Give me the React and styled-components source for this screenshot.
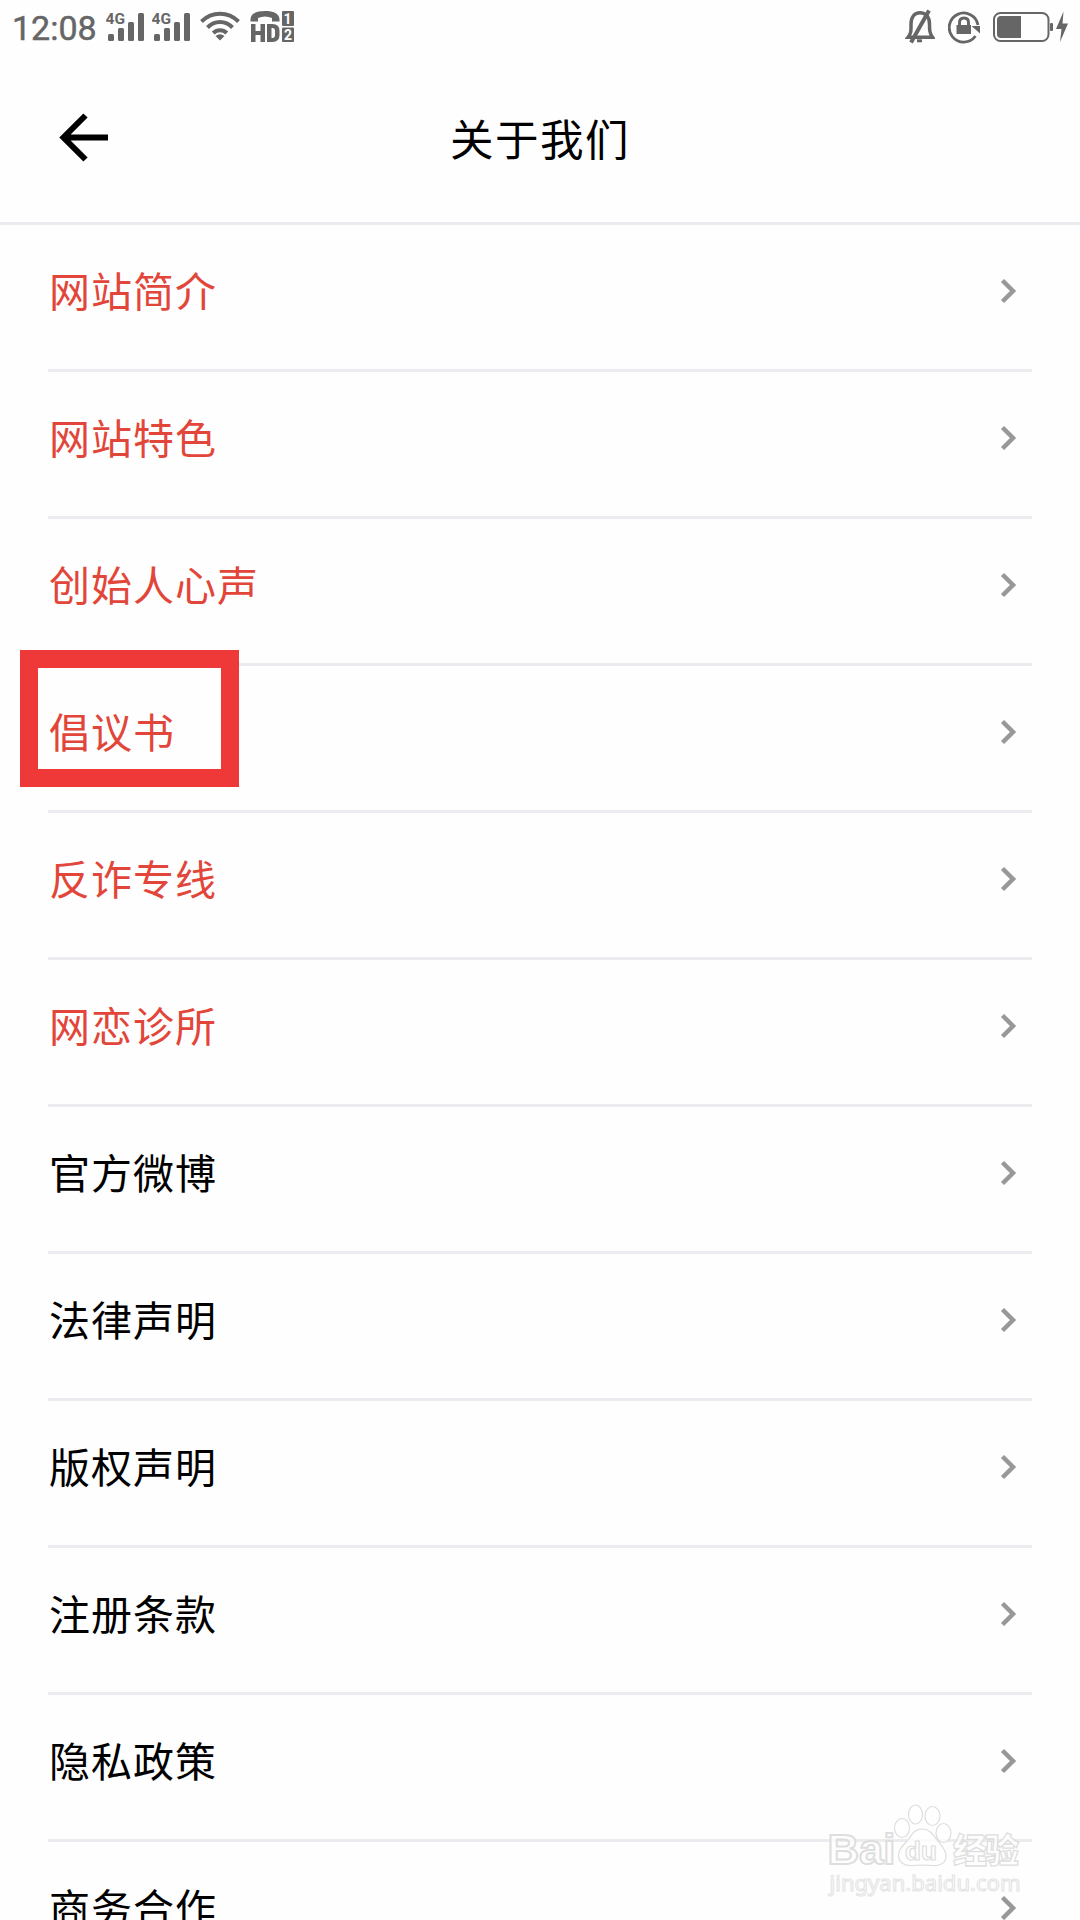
import React from "react";
import styled, { createGlobalStyle } from "styled-components";

const GlobalStyle = createGlobalStyle`
  * { box-sizing: border-box; }
  body { margin: 0; background: #fefefe; }
`;

const GREY = "#666666";

const Screen = styled.div`
  position: relative;
  width: 1080px;
  height: 1920px;
  overflow: hidden;
  display: flex;
  flex-direction: column;
  background: #fefefe;
  color: #000;
  font-family: "Noto Sans CJK SC", sans-serif;
`;

const StatusBar = styled.div`
  flex: none;
  height: 54px;
  padding: 0 11px 0 12px;
  display: flex;
  align-items: center;
  justify-content: space-between;
  color: ${GREY};
`;

const StatusGroup = styled.div`
  display: flex;
  align-items: center;
  gap: ${(p) => p.$gap}px;
`;

const Clock = styled.span`
  width: 88px;
  font: 400 34px/54px Roboto, sans-serif;
  -webkit-text-stroke: 0.5px ${GREY};
  white-space: nowrap;
  padding-top: 2px;
`;

const Glyph = styled.svg`
  display: block;
  flex: none;
`;

const Header = styled.header`
  flex: none;
  height: 171px;
  display: grid;
  grid-template-columns: 160px 1fr 160px;
  align-items: center;
  border-bottom: 3px solid #ebecf0;
`;

const BackButton = styled.button`
  display: flex;
  border: 0;
  padding: 0 0 60px 59px;
  background: none;
  align-self: end;
`;

const Title = styled.h1`
  margin: 0;
  text-align: center;
  font-size: 43.500px;
  font-weight: 400;
  line-height: 60px;
  letter-spacing: 1.500px;
`;

const List = styled.ul`
  list-style: none;
  margin: 0;
  padding: 0 48px;
`;

const Row = styled.li`
  position: relative;
  height: 147px;
  display: flex;
  align-items: center;
  justify-content: space-between;
  padding: 0 15px 12px 1px;
  border-bottom: 3px solid #ebecf0;
  color: ${(p) => (p.$accent ? "#e2463a" : "#000")};
`;

const Label = styled.span`
  padding-bottom: 4px;
  font-size: 41px;
  line-height: 60px;
  letter-spacing: 1px;
`;

const Highlight = styled.div`
  position: absolute;
  left: -28px;
  top: -16px;
  width: 219px;
  height: 137px;
  border: 18px solid #ef3838;
`;

const Watermark = styled.svg`
  position: absolute;
  left: 810px;
  top: 1790px;
`;

const ITEMS = [
  { text: "网站简介", accent: true },
  { text: "网站特色", accent: true },
  { text: "创始人心声", accent: true },
  { text: "倡议书", accent: true, marked: true },
  { text: "反诈专线", accent: true },
  { text: "网恋诊所", accent: true },
  { text: "官方微博" },
  { text: "法律声明" },
  { text: "版权声明" },
  { text: "注册条款" },
  { text: "隐私政策" },
  { text: "商务合作" },
];

const Signal = () => (
  <Glyph width="40" height="54" viewBox="0 0 40 54" fill={GREY}>
    <text x="-0.500" y="23.800" fontFamily="Roboto, sans-serif" fontWeight="700" fontSize="15.500">4G</text>
    <rect x="2" y="34" width="6" height="7" rx="1.500" />
    <rect x="12" y="28" width="6" height="13" rx="1.500" />
    <rect x="22" y="22" width="6" height="19" rx="1.500" />
    <rect x="32" y="13" width="6" height="28" rx="1.500" />
  </Glyph>
);

const Wifi = () => (
  <Glyph width="40" height="54" viewBox="0 0 40 54" fill="none" stroke={GREY} strokeWidth="4">
    <path d="M1.500 21.500C12 11.200 28 11.200 38.500 21.500" />
    <path d="M7.500 27.500C14.500 20.300 25.500 20.300 32.500 27.500" />
    <path d="M13.200 33C17 29.200 23 29.200 26.800 33" />
    <path d="M15.500 36Q20 32.500 24.500 36L20 40.500Z" fill={GREY} stroke="none" />
  </Glyph>
);

const HdCall = () => (
  <Glyph width="44" height="54" viewBox="0 0 44 54" fill={GREY}>
    <path d="M0.500 21.500V19C1 13.500 6.500 11 15 11S29 13.500 29.500 19V21.500H22V18Q15 15 8 18V21.500Z" />
    <path d="M1 24H5.500V31H10.500V24H15V42H10.500V35H5.500V42H1Z" />
    <path fillRule="evenodd" d="M17 24H22.500Q29.500 24 29.500 31V35Q29.500 42 22.500 42H17ZM21.500 28V38H22.500Q25 38 25 35V31Q25 28 22.500 28Z" />
    <rect x="32" y="11" width="12" height="15" rx="1" />
    <rect x="32" y="27.500" width="12" height="14.500" rx="1" />
    <g fill="#fff" fontFamily="Roboto, sans-serif" fontWeight="700" fontSize="14" textAnchor="middle">
      <text x="37.500" y="23.500">1</text>
      <text x="38" y="40">2</text>
    </g>
  </Glyph>
);

const BellOff = () => (
  <Glyph width="30" height="54" viewBox="0 0 30 54" fill="none" stroke={GREY} strokeWidth="3.500">
    <path d="M3 37.300C6.500 33 6 30 6 24C6 17 9.500 12.700 15 12.700S24.500 17 24.500 24C24.500 30 24.500 33 27.500 37.300Z" />
    <path d="M24 10.500L6 42.500" strokeWidth="4" />
    <path d="M12 40.800H17" strokeWidth="3" />
  </Glyph>
);

const RotationLock = () => (
  <Glyph width="32" height="54" viewBox="0 0 32 54" fill="none" stroke={GREY} strokeWidth="2.800">
    <path d="M27.500 36A14.500 14.500 0 1 1 30 25" />
    <path d="M23.500 26H32V33.500Z" fill={GREY} stroke="none" />
    <rect x="8.500" y="25" width="14.500" height="9" fill={GREY} stroke="none" />
    <path d="M11.500 26V22.500Q11.500 18 16 18T20.500 22.500V26" strokeWidth="3" />
  </Glyph>
);

const Battery = () => (
  <Glyph width="76" height="54" viewBox="0 0 76 54" fill={GREY}>
    <rect x="1" y="13" width="54.500" height="28" rx="6.500" fill="none" stroke={GREY} strokeWidth="2" />
    <path d="M28 16V38H8Q4 38 4 34V20Q4 16 8 16Z" />
    <rect x="57" y="23" width="3" height="8" rx="1" />
    <path d="M70.500 11.500L63 29H68.500L67 42L75 23.500H69.500Z" />
  </Glyph>
);

const BackArrow = () => (
  <Glyph width="49" height="49" viewBox="0 0 49 49" fill="none" stroke="#000" strokeWidth="6">
    <path d="M26.500 2.500L4.500 24.500L26.500 46.500M5 24.500H49" />
  </Glyph>
);

const Chevron = () => (
  <Glyph width="17" height="26" viewBox="0 0 17 26" fill="none" stroke="#97989a" strokeWidth="4.500">
    <path d="M2.500 2.500L13 13L2.500 23.500" />
  </Glyph>
);

const BaiduMark = () => (
  <Watermark width="240" height="130" viewBox="0 0 240 130" fill="#fff" fillOpacity="0.8" stroke="#dedede" strokeWidth="1.200">
    <g fontFamily='"Liberation Sans", sans-serif' fontWeight="700">
      <text x="17.500" y="74" fontSize="43" textLength="68" lengthAdjust="spacingAndGlyphs" strokeWidth="2">Bai</text>
      <ellipse cx="92" cy="38" rx="7.500" ry="9.500" />
      <ellipse cx="105.500" cy="24.500" rx="7" ry="9.500" />
      <ellipse cx="122.500" cy="26" rx="7.500" ry="9.500" />
      <ellipse cx="133.500" cy="43" rx="7.500" ry="9.500" />
      <path d="M112 39C119 39 123 44 127 50C131 55 136 59 136 66C136 73 130 76 124 75.500C116 75 108 75 101 75.500C94 76 88.500 72 88.500 65C88.500 58 94 55 98 50C102 44 105 39 112 39Z" />
      <text x="95" y="70" fontSize="26" textLength="32">du</text>
    </g>
    <text x="143" y="72.500" fontSize="34" fontWeight="900" textLength="66" fontFamily='"Noto Sans CJK SC", sans-serif' strokeWidth="1.300">经验</text>
    <text x="19.500" y="101" fontSize="22.500" textLength="191" lengthAdjust="spacingAndGlyphs" fontFamily='"Noto Sans", sans-serif' stroke="#e4e4e4" strokeWidth="1.100">jingyan.baidu.com</text>
  </Watermark>
);

export default function App() {
  return (
    <Screen>
      <GlobalStyle />
      <StatusBar>
        <StatusGroup $gap={8}>
          <StatusGroup $gap={6}>
            <Clock>12:08</Clock>
            <Signal />
            <Signal />
          </StatusGroup>
          <StatusGroup $gap={10}>
            <Wifi />
            <HdCall />
          </StatusGroup>
        </StatusGroup>
        <StatusGroup $gap={13}>
          <BellOff />
          <StatusGroup $gap={13}>
            <RotationLock />
            <Battery />
          </StatusGroup>
        </StatusGroup>
      </StatusBar>
      <Header>
        <BackButton aria-label="返回">
          <BackArrow />
        </BackButton>
        <Title>关于我们</Title>
      </Header>
      <List>
        {ITEMS.map((item) => (
          <Row key={item.text} $accent={item.accent}>
            <Label>{item.text}</Label>
            <Chevron />
            {item.marked && <Highlight />}
          </Row>
        ))}
      </List>
      <BaiduMark />
    </Screen>
  );
}
